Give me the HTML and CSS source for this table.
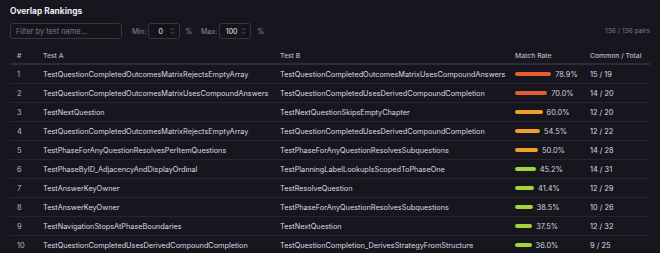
FILE: index.html
```html
<!DOCTYPE html>
<html>
<head>
<meta charset="utf-8">
<link rel="stylesheet" href="styles.css">
</head>
<body>
<div class="panel">
  <h2 class="title">Overlap Rankings</h2>
  <div class="toolbar">
    <input class="filter" type="text" placeholder="Filter by test name...">
    <span class="lbl lbl-min">Min:</span>
    <div class="numbox"><span class="num">0</span><svg class="spin" width="5" height="8" viewBox="0 0 5 8"><path d="M0.8 3 L2.5 1.2 L4.2 3 M0.8 5 L2.5 6.8 L4.2 5" fill="none" stroke="#6b6b78" stroke-width="0.8"/></svg></div>
    <span class="pct">%</span>
    <span class="lbl lbl-max">Max:</span>
    <div class="numbox"><span class="num">100</span><svg class="spin" width="5" height="8" viewBox="0 0 5 8"><path d="M0.8 3 L2.5 1.2 L4.2 3 M0.8 5 L2.5 6.8 L4.2 5" fill="none" stroke="#6b6b78" stroke-width="0.8"/></svg></div>
    <span class="pct pct-max">%</span>
    <span class="count">136 / 136 pairs</span>
  </div>
  <table class="rank">
    <thead>
      <tr><th class="c-num">#</th><th class="c-a">Test A</th><th class="c-b">Test B</th><th class="c-rate">Match Rate</th><th class="c-ct">Common / Total</th></tr>
    </thead>
    <tbody>
      <tr><td class="c-num">1</td><td class="name">TestQuestionCompletedOutcomesMatrixRejectsEmptyArray</td><td class="name">TestQuestionCompletedOutcomesMatrixUsesCompoundAnswers</td><td><div class="rate"><span class="bar hot" style="width:36.3px"></span><span class="rv">78.9%</span></div></td><td>15 / 19</td></tr>
      <tr><td class="c-num">2</td><td class="name">TestQuestionCompletedOutcomesMatrixUsesCompoundAnswers</td><td class="name">TestQuestionCompletedUsesDerivedCompoundCompletion</td><td><div class="rate"><span class="bar hot" style="width:32.2px"></span><span class="rv">70.0%</span></div></td><td>14 / 20</td></tr>
      <tr><td class="c-num">3</td><td class="name">TestNextQuestion</td><td class="name">TestNextQuestionSkipsEmptyChapter</td><td><div class="rate"><span class="bar warm" style="width:27.6px"></span><span class="rv">60.0%</span></div></td><td>12 / 20</td></tr>
      <tr><td class="c-num">4</td><td class="name">TestQuestionCompletedOutcomesMatrixRejectsEmptyArray</td><td class="name">TestQuestionCompletedUsesDerivedCompoundCompletion</td><td><div class="rate"><span class="bar warm" style="width:25.1px"></span><span class="rv">54.5%</span></div></td><td>12 / 22</td></tr>
      <tr><td class="c-num">5</td><td class="name">TestPhaseForAnyQuestionResolvesPerItemQuestions</td><td class="name">TestPhaseForAnyQuestionResolvesSubquestions</td><td><div class="rate"><span class="bar warm" style="width:23px"></span><span class="rv">50.0%</span></div></td><td>14 / 28</td></tr>
      <tr><td class="c-num">6</td><td class="name">TestPhaseByID_AdjacencyAndDisplayOrdinal</td><td class="name">TestPlanningLabelLookupIsScopedToPhaseOne</td><td><div class="rate"><span class="bar cool" style="width:20.8px"></span><span class="rv">45.2%</span></div></td><td>14 / 31</td></tr>
      <tr><td class="c-num">7</td><td class="name">TestAnswerKeyOwner</td><td class="name">TestResolveQuestion</td><td><div class="rate"><span class="bar cool" style="width:19px"></span><span class="rv">41.4%</span></div></td><td>12 / 29</td></tr>
      <tr><td class="c-num">8</td><td class="name">TestAnswerKeyOwner</td><td class="name">TestPhaseForAnyQuestionResolvesSubquestions</td><td><div class="rate"><span class="bar cool" style="width:17.7px"></span><span class="rv">38.5%</span></div></td><td>10 / 26</td></tr>
      <tr><td class="c-num">9</td><td class="name">TestNavigationStopsAtPhaseBoundaries</td><td class="name">TestNextQuestion</td><td><div class="rate"><span class="bar cool" style="width:17.3px"></span><span class="rv">37.5%</span></div></td><td>12 / 32</td></tr>
      <tr><td class="c-num">10</td><td class="name">TestQuestionCompletedUsesDerivedCompoundCompletion</td><td class="name">TestQuestionCompletion_DerivesStrategyFromStructure</td><td><div class="rate"><span class="bar cool" style="width:16.6px"></span><span class="rv">36.0%</span></div></td><td>9 / 25</td></tr>
    </tbody>
  </table>
</div>
</body>
</html>
```
FILE: styles.css
```css
html, body {
  margin: 0;
  padding: 0;
  background: #17161f;
}
body {
  font-family: Inter, "Noto Sans", sans-serif;
  color: #d9d9e2;
  width: 660px;
  height: 253px;
  overflow: hidden;
}
.panel {
  padding: 4px 10px 0 10px;
}
.title {
  margin: 0;
  font-size: 8.4px;
  font-weight: 700;
  color: #ececf2;
  line-height: 14px;
}
.toolbar {
  display: flex;
  align-items: center;
  margin-top: 5px;
  height: 16px;
}
.filter {
  box-sizing: border-box;
  width: 112px;
  height: 16px;
  background: #15141b;
  border: 1px solid #373644;
  border-radius: 3px;
  font-family: Inter, "Noto Sans", sans-serif;
  font-size: 7.4px;
  color: #ddd;
  padding: 0 5px;
  outline: none;
}
.filter::placeholder {
  color: #7c7b88;
}
.lbl {
  font-size: 7px;
  color: #8d8c99;
  margin-right: 2px;
}
.lbl-min {
  margin-left: 10px;
}
.lbl-max {
  margin-left: 9px;
}
.numbox {
  box-sizing: border-box;
  width: 32px;
  height: 16px;
  border: 1px solid #373644;
  border-radius: 3px;
  background: #15141b;
  display: flex;
  align-items: center;
  padding-right: 4px;
  gap: 1px;
}
.num {
  font-size: 7px;
  color: #e6e6ee;
  flex: 1;
  text-align: center;
  padding-left: 3px;
}
.spin {
  display: block;
}
.pct {
  font-size: 7px;
  color: #8d8c99;
  margin-left: 5px;
}
.pct-max {
  margin-left: 6px;
}
.count {
  margin-left: auto;
  font-size: 6.6px;
  color: #7d7c88;
}
.rank {
  width: 640px;
  border-collapse: collapse;
  margin-top: 9px;
  font-size: 7.4px;
  table-layout: fixed;
}
.rank th {
  text-align: left;
  font-weight: 500;
  color: #b8b7c3;
  font-size: 6.8px;
  height: 15px;
  padding: 0;
  border-bottom: 2px solid #2c2b38;
}
.rank td {
  height: 18px;
  padding: 0;
  border-bottom: 0.5px solid #262531;
  white-space: nowrap;
  overflow: hidden;
  color: #dadae3;
}
.rank td.name {
  font-size: 7.3px;
}
.rank tbody tr:last-child td {
  border-bottom: none;
}
.rank .c-num {
  width: 33px;
  padding-left: 7px;
  box-sizing: border-box;
  color: #b9b8c4;
}
th.c-num { color: #8e8d9a; }
.c-a { width: 237px; }
.c-b { width: 235px; }
.c-rate { width: 75px; }
.rate {
  display: flex;
  align-items: center;
  gap: 4px;
}
.bar {
  display: block;
  height: 3.5px;
  border-radius: 2px;
}
.bar.hot { background: #e45f2b; }
.bar.warm { background: #eea124; }
.bar.cool { background: #a1d63a; }
.rv {
  color: #d3d3dc;
  font-size: 7.4px;
}
```
